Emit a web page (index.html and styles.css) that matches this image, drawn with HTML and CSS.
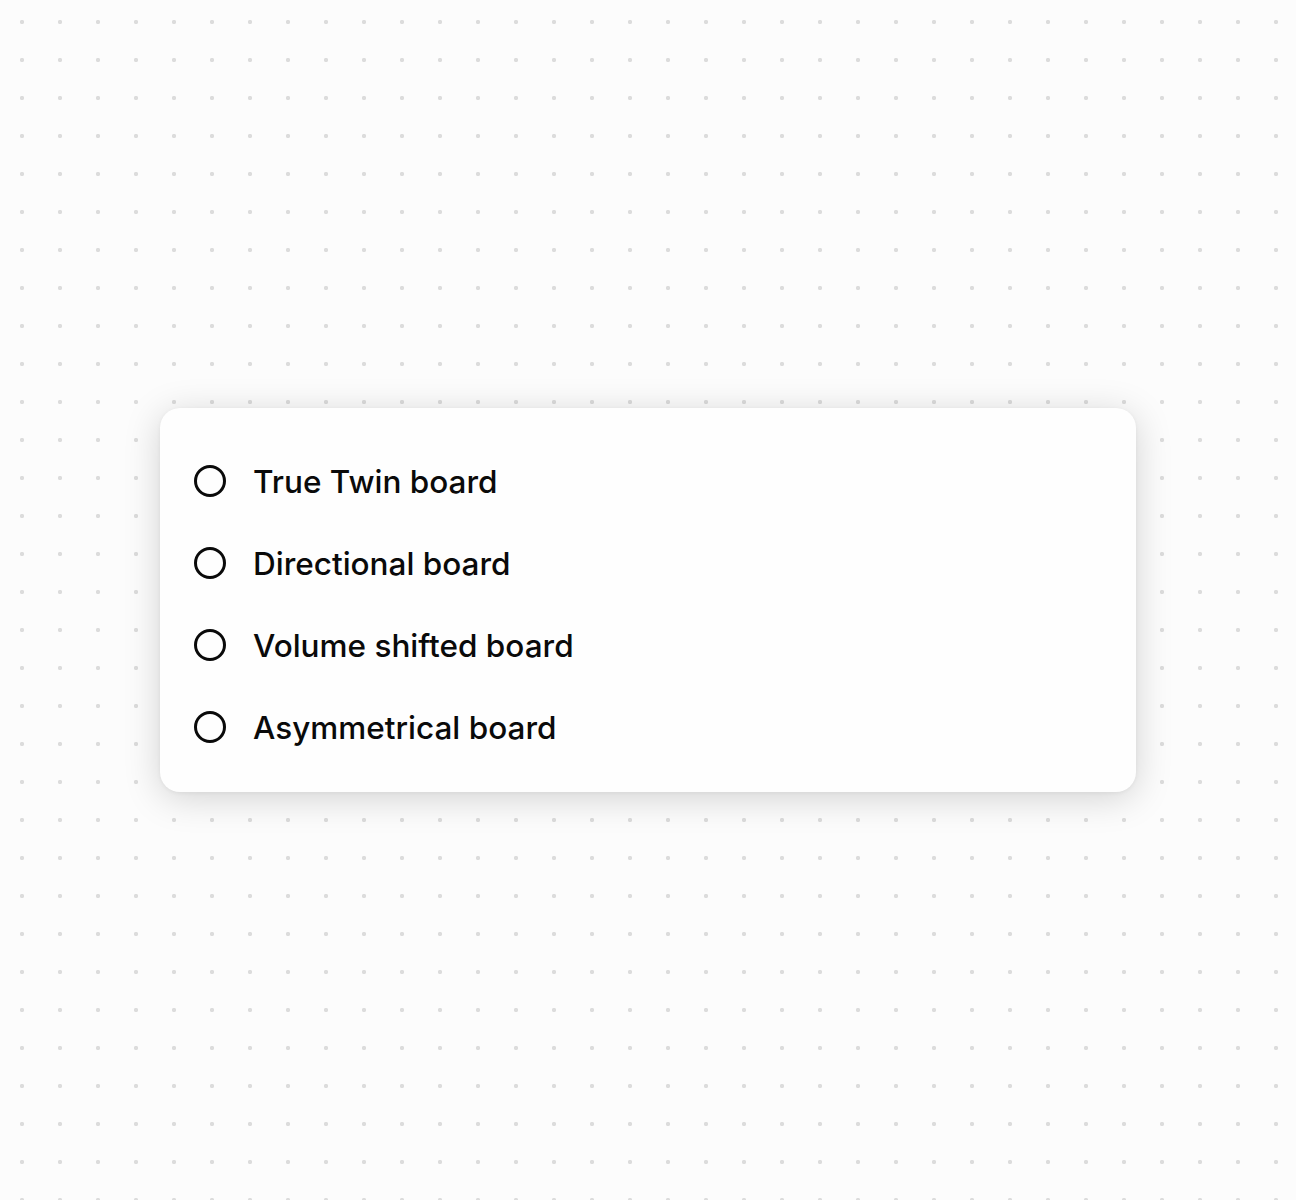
FILE: index.html
```html
<!DOCTYPE html>
<html lang="en">
<head>
<meta charset="utf-8">
<title>Board types</title>
<link rel="stylesheet" href="styles.css">
</head>
<body>
<main class="canvas">
  <section class="card">
    <label class="option"><span class="radio"></span><span class="label">True Twin board</span></label>
    <label class="option"><span class="radio"></span><span class="label">Directional board</span></label>
    <label class="option"><span class="radio"></span><span class="label">Volume shifted board</span></label>
    <label class="option"><span class="radio"></span><span class="label">Asymmetrical board</span></label>
  </section>
</main>
</body>
</html>
```

FILE: styles.css
```css
html, body {
  margin: 0;
  padding: 0;
}
body {
  background-color: #fcfcfc;
  background-image: radial-gradient(circle at 19px 19px, #dcdcdc 0, #dcdcdc 1.8px, rgba(220,220,220,0) 2.5px);
  background-size: 38px 38px;
  background-position: 3px 3px;
  font-family: Inter, "Noto Sans", sans-serif;
  color: #0a0a0a;
}
.canvas {
  min-height: 1200px;
  display: flex;
  align-items: center;
  justify-content: center;
}
.card {
  width: 976px;
  height: 384px;
  box-sizing: border-box;
  background: #fefefe;
  border-radius: 20px;
  box-shadow: 0 6px 36px rgba(0, 0, 0, 0.17), 0 1px 4px rgba(0,0,0,0.05);
  padding: 32px 34px 24px;
  display: flex;
  flex-direction: column;
}
.option {
  height: 82px;
  display: flex;
  align-items: center;
  gap: 27px;
}
.radio {
  width: 32px;
  height: 32px;
  box-sizing: border-box;
  border: 3px solid #0a0a0a;
  border-radius: 50%;
  flex: none;
}
.label {
  font-size: 31.5px;
  font-weight: 500;
  letter-spacing: 0;
}
```
